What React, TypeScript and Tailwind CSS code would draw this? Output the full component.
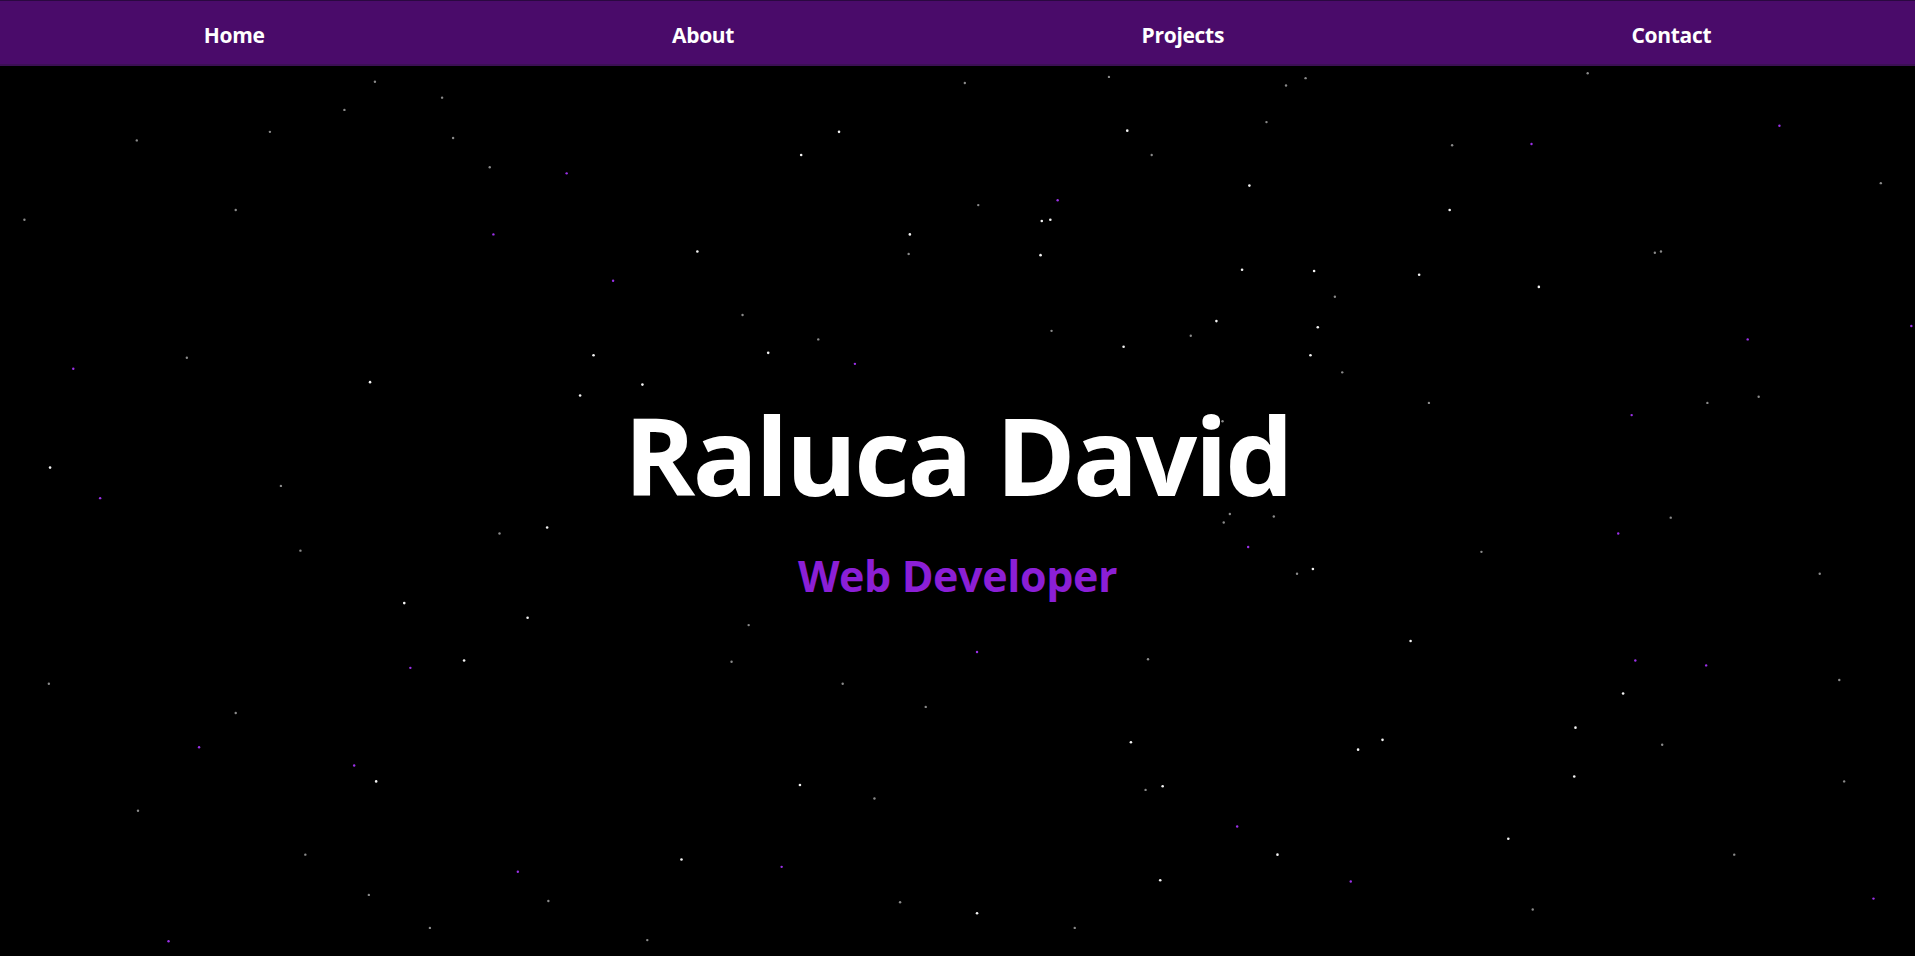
import { FC } from 'react';

// star positions read off the reference (shown at 1568 wide), scaled up below
// w = white/grey, g = dim grey, p = purple
const stars: [number, number, string][] = [
  [112, 115, 'g'], [221, 108, 'g'], [307, 67, 'g'], [282, 90, 'g'], [362, 80, 'g'], [371, 113, 'g'],
  [401, 137, 'g'], [432, 36, 'p'], [704, 30, 'p'], [745, 10, 'p'], [810, 8, 'g'], [656, 127, 'w'], [687, 108, 'w'],
  [745, 192, 'w'], [801, 168, 'g'], [853, 181, 'w'], [860, 180, 'w'], [852, 209, 'w'], [923, 107, 'w'],
  [943, 127, 'g'], [1023, 152, 'w'], [1037, 100, 'g'], [1053, 70, 'g'], [1069, 64, 'g'], [1187, 172, 'w'],
  [1189, 119, 'g'], [1254, 118, 'p'], [1360, 206, 'g'], [1355, 207, 'g'], [1162, 225, 'w'], [1260, 235, 'w'],
  [1017, 221, 'w'], [1076, 222, 'w'], [1093, 243, 'g'], [1079, 268, 'w'], [1073, 291, 'w'], [996, 263, 'w'],
  [975, 275, 'g'], [920, 284, 'w'], [861, 271, 'g'], [670, 278, 'g'], [629, 289, 'w'], [571, 206, 'w'],
  [486, 291, 'w'], [475, 324, 'w'], [526, 315, 'w'], [303, 313, 'w'], [153, 293, 'g'], [41, 383, 'w'],
  [82, 408, 'p'], [230, 398, 'g'], [246, 451, 'g'], [331, 494, 'w'], [380, 541, 'w'], [432, 506, 'w'],
  [448, 432, 'w'], [409, 437, 'g'], [193, 172, 'g'], [404, 192, 'p'], [60, 302, 'p'], [1440, 325, 'g'],
  [1398, 330, 'g'], [1336, 340, 'p'], [1368, 424, 'g'], [1325, 437, 'p'], [1397, 545, 'p'], [1506, 557, 'g'],
  [1339, 541, 'p'], [1329, 568, 'w'], [1290, 596, 'w'], [1289, 636, 'w'], [1235, 687, 'w'], [1155, 525, 'w'],
  [1132, 606, 'w'], [1112, 614, 'w'], [1062, 470, 'g'], [1075, 466, 'w'], [1043, 423, 'g'], [1002, 428, 'g'],
  [1007, 421, 'g'], [952, 644, 'w'], [938, 647, 'g'], [926, 608, 'w'], [1013, 677, 'p'], [1046, 700, 'w'],
  [1106, 722, 'p'], [800, 748, 'w'], [737, 739, 'g'], [655, 643, 'w'], [558, 704, 'w'], [640, 710, 'p'],
  [424, 714, 'p'], [449, 738, 'g'], [352, 760, 'g'], [302, 733, 'g'], [290, 627, 'p'], [308, 640, 'w'],
  [163, 612, 'p'], [113, 664, 'g'], [193, 584, 'g'], [138, 771, 'p'], [950, 721, 'w'], [613, 512, 'g'],
  [599, 542, 'g'], [1565, 267, 'p'], [1457, 103, 'p'], [1431, 278, 'p'], [1534, 736, 'p'], [1361, 610, 'g'],
  [716, 654, 'g'], [758, 579, 'g'], [800, 534, 'p'], [744, 208, 'g'], [1001, 345, 'g'], [1099, 305, 'g'],
  [866, 164, 'p'], [1022, 448, 'p'], [336, 547, 'p'], [464, 142, 'p'], [502, 230, 'p'], [608, 258, 'g'],
  [700, 298, 'p'], [790, 68, 'g'], [908, 63, 'g'], [1213, 452, 'g'], [1490, 470, 'g'], [1510, 640, 'g'],
  [1420, 700, 'g'], [1255, 745, 'g'], [880, 760, 'g'], [530, 770, 'g'], [250, 700, 'g'], [40, 560, 'g'],
  [20, 180, 'g'], [1540, 150, 'g'], [1300, 60, 'g'], [1170, 330, 'g'], [940, 540, 'g'], [690, 560, 'g'],
];

const starColor: Record<string, string> = { w: '#f2f2f2', g: '#8a8a8a', p: '#9b30e8' };

const StarField: FC = () => (
  <svg className="absolute inset-0 w-full h-full pointer-events-none" viewBox="0 0 1915 956" preserveAspectRatio="none">
    {stars.map(([x, y, c], i) => (
      <circle key={i} cx={x * 1.2213} cy={y * 1.2209} r={c === 'w' ? 1.3 : 1.2} fill={starColor[c]} />
    ))}
  </svg>
);

const links = ['Home', 'About', 'Projects', 'Contact'];

export default function App() {
  return (
    <div className="relative min-h-screen h-[956px] bg-black overflow-hidden font-['Open_Sans',sans-serif]">
      <StarField />
      <nav className="relative h-[66px] bg-[#4a0b6a] border-t border-[#2a0840] border-b-2 border-b-[#3c0f55] flex items-center justify-around pt-1.5">
        {links.map((l) => (
          <a key={l} href="#" className="text-white font-bold text-[21px] tracking-[-0.3px]">{l}</a>
        ))}
      </nav>
      <main className="relative flex flex-col items-center pt-[335px]">
        <h1 className="text-white font-bold text-[108px] leading-none tracking-[-2.5px]">Raluca David</h1>
        <h2 className="mt-[45px] text-[#8b1fd6] font-bold text-[43px] leading-none tracking-[-0.4px]">Web Developer</h2>
      </main>
    </div>
  );
}
